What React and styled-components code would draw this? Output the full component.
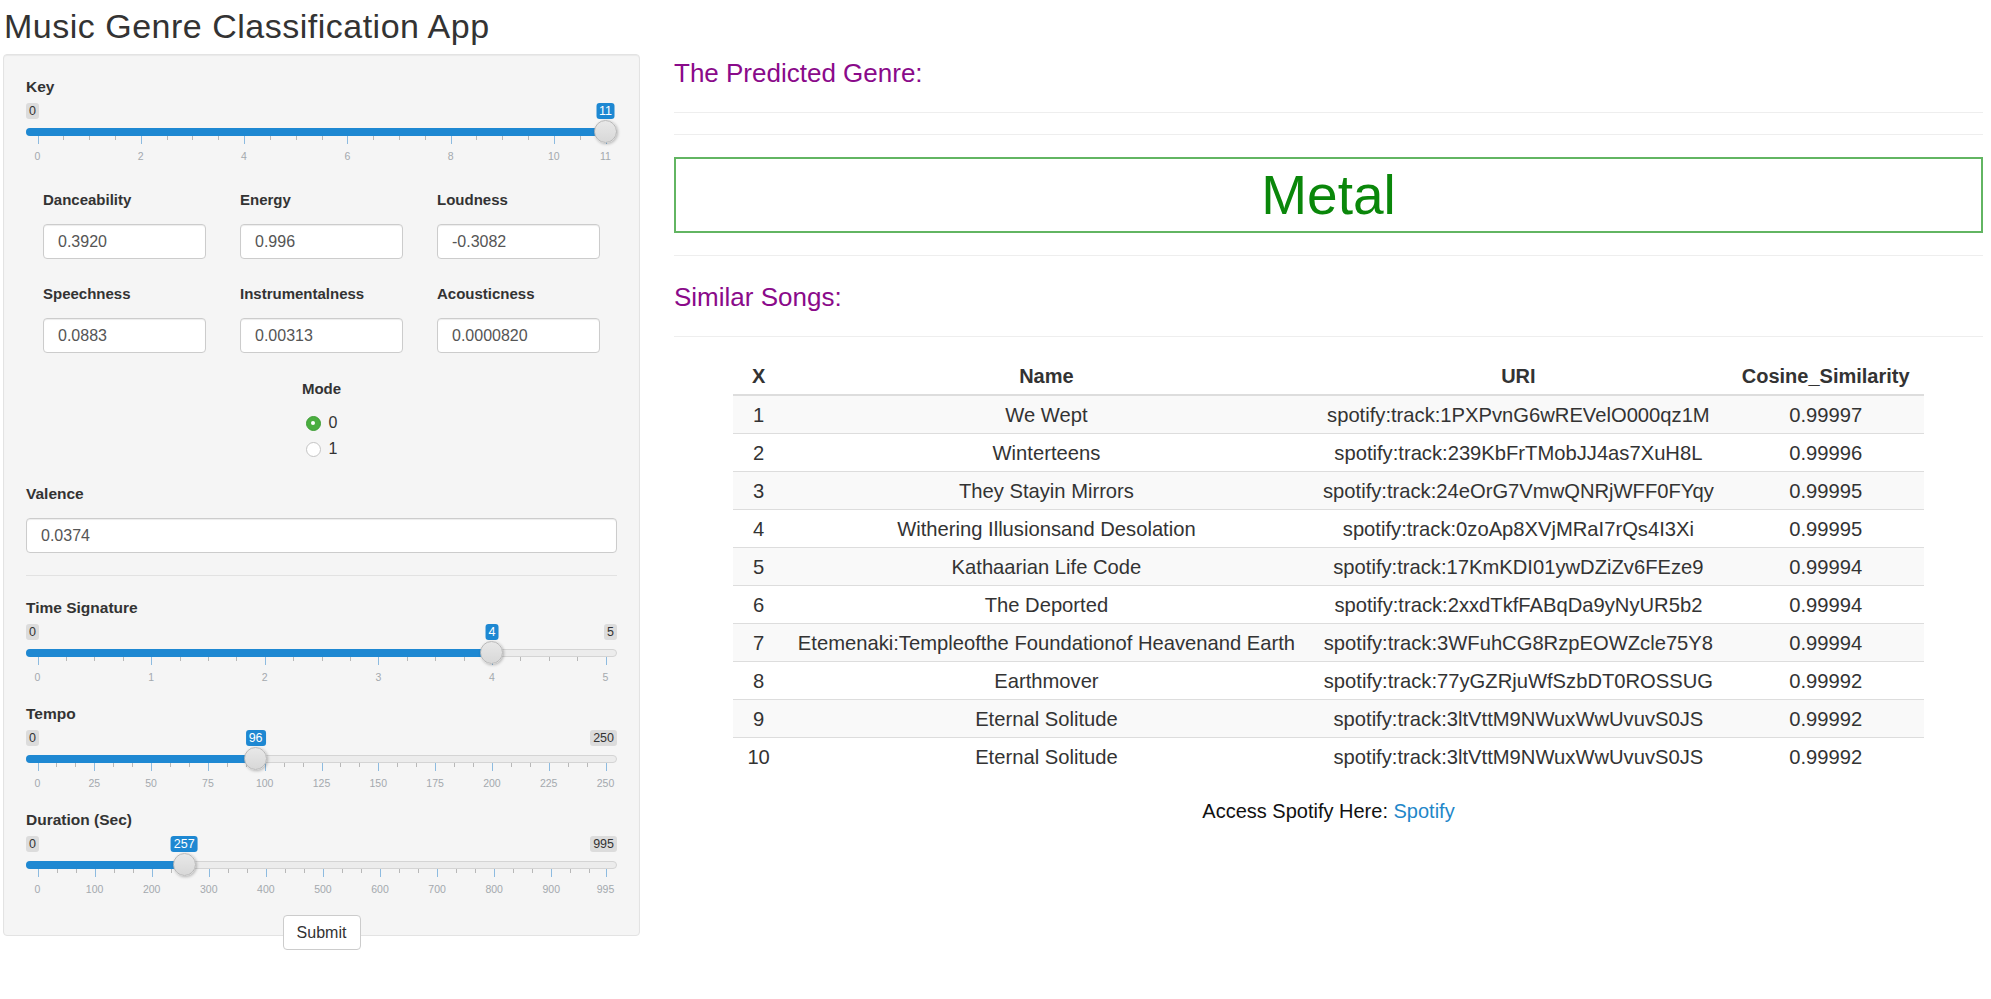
import React from 'react';
import styled, { createGlobalStyle } from 'styled-components';

const GlobalStyles = createGlobalStyle`
  body {
    margin: 0;
    padding: 0;
    background: #fff;
    color: #333;
    font-family: 'Liberation Sans', Helvetica, Arial, sans-serif;
  }
  * { box-sizing: border-box; }
`;

const BLUE = '#1e88d2';

const Page = styled.div`
  padding: 8px 8px 40px 3px;
`;

const Title = styled.h1`
  margin: 0 0 9px 1px;
  font-size: 34px;
  line-height: 37px;
  font-weight: 400;
  letter-spacing: 0.5px;
  color: #333;
`;

const Layout = styled.div`
  display: flex;
  align-items: flex-start;
  gap: 34px;
`;

const Sidebar = styled.div`
  width: 637px;
  flex: none;
  display: flex;
  flex-direction: column;
`;

const Well = styled.div`
  background: #f5f5f5;
  border: 1px solid #e3e3e3;
  border-radius: 4px;
  box-shadow: inset 0 1px 1px rgba(0, 0, 0, 0.05);
  padding: 22px 22px 19px;
`;

const Label = styled.div`
  font-size: ${p => (p.$small ? '15px' : '15.5px')};
  font-weight: 700;
  line-height: 20px;
  color: #333;
`;

const SliderBlock = styled.div`
  margin-bottom: 16px;
`;

const SliderBox = styled.div`
  position: relative;
  height: 70px;
`;

const Badge = styled.span`
  position: absolute;
  top: 6px;
  font-size: 12.5px;
  line-height: 14px;
  padding: 1px 3px;
  border-radius: 3px;
  white-space: nowrap;
  background: ${p => (p.$value ? BLUE : 'rgba(0,0,0,0.1)')};
  color: ${p => (p.$value ? '#fff' : '#333')};
`;

const Track = styled.div`
  position: absolute;
  top: 31px;
  left: 0;
  right: 0;
  height: 8px;
  border-radius: 8px;
  background: #ececec;
  border: 1px solid #d4d4d4;
`;

const Bar = styled.div`
  position: absolute;
  top: 31px;
  left: 0;
  height: 8px;
  border-radius: 8px 0 0 8px;
  background: ${BLUE};
`;

const Thumb = styled.div`
  position: absolute;
  top: 23px;
  width: 23px;
  height: 23px;
  margin-left: -11.5px;
  border-radius: 50%;
  background: linear-gradient(#e8e8e8, #d8d8d8);
  border: 1px solid #b8b8b8;
  box-shadow: 1px 1px 3px rgba(0, 0, 0, 0.25);
  z-index: 2;
`;

const Tick = styled.span`
  position: absolute;
  top: 39px;
  width: 1px;
  height: ${p => (p.$major ? '8px' : '4px')};
  background: ${p => (p.$major ? '#8dbbe0' : '#b8b8b8')};
`;

const TickLabel = styled.span`
  position: absolute;
  top: 52px;
  transform: translateX(-50%);
  font-size: 10.5px;
  line-height: 14px;
  color: #a4a9ae;
`;

const InputGrid = styled.div`
  display: grid;
  grid-template-columns: repeat(3, 1fr);
  row-gap: 25px;
  margin-top: 23px;
`;

const InputCell = styled.div`
  padding: 0 17px;
`;

const TextInput = styled.input`
  display: block;
  width: 100%;
  height: 35px;
  margin-top: 14px;
  padding: 0 14px;
  font-family: inherit;
  font-size: 16px;
  color: #555;
  background: #fff;
  border: 1px solid #ccc;
  border-radius: 4px;
  box-shadow: inset 0 1px 1px rgba(0, 0, 0, 0.075);
  outline: none;
`;

const ModeGroup = styled.div`
  margin-top: 26px;
  display: flex;
  flex-direction: column;
  align-items: center;
`;

const RadioList = styled.div`
  margin-top: 11px;
  display: flex;
  flex-direction: column;
`;

const RadioItem = styled.label`
  height: 26px;
  display: flex;
  align-items: center;
  gap: 8px;
  font-size: 16px;
  color: #333;
`;

const RadioDot = styled.span`
  width: 15px;
  height: 15px;
  border-radius: 50%;
  display: flex;
  align-items: center;
  justify-content: center;
  background: ${p => (p.$on ? '#4aae3f' : '#fff')};
  border: 1px solid ${p => (p.$on ? '#3f9e36' : '#c4c4c4')};

  &::after {
    content: '';
    width: 4px;
    height: 4px;
    border-radius: 50%;
    background: ${p => (p.$on ? '#fff' : 'transparent')};
  }
`;

const FieldBlock = styled.div`
  margin-top: 22px;
`;

const Divider = styled.hr`
  margin: 22px 0 22px;
  border: 0;
  border-top: 1px solid #e2e2e2;
`;

const SubmitRow = styled.div`
  display: flex;
  justify-content: center;
  margin-top: -21px;
  position: relative;
`;

const Button = styled.button`
  height: 35px;
  width: 78px;
  font-family: inherit;
  font-size: 16px;
  color: #333;
  background: #fff;
  border: 1px solid #ccc;
  border-radius: 4px;
`;

const Main = styled.div`
  flex: 1;
  padding-top: 5px;
  display: flex;
  flex-direction: column;
`;

const Heading = styled.h3`
  margin: ${p => p.$top || 0}px 0 0;
  font-size: 26px;
  line-height: 29px;
  font-weight: 400;
  color: #8a0a8a;
`;

const Rule = styled.hr`
  margin: ${p => p.$top}px 0 0;
  border: 0;
  border-top: 1px solid #eee;
`;

const GenreBox = styled.div`
  margin-top: 22px;
  height: 76px;
  border: 2px solid #62b562;
  display: flex;
  align-items: center;
  justify-content: center;
  font-size: 55px;
  color: #0a870a;
`;

const Table = styled.table`
  margin: 21px auto 0;
  border-collapse: collapse;
  font-size: 20.2px;
  color: #333;

  th {
    font-size: 20px;
    font-weight: 700;
    padding: 8px 14px 7px;
    line-height: 21px;
    border-bottom: 2px solid #ddd;
    text-align: center;
    white-space: nowrap;
  }

  td {
    padding: 9px 14px 8px;
    line-height: 20px;
    border-top: 1px solid #ddd;
    text-align: center;
    white-space: nowrap;
  }

  tbody tr:nth-child(odd) {
    background: #f9f9f9;
  }
`;

const LinkLine = styled.p`
  margin: 25px 0 0;
  text-align: center;
  font-size: 20px;
  line-height: 22px;
  color: #111;

  a {
    color: #1f87c9;
    text-decoration: none;
  }
`;

const pos = f => `calc(11.5px + (100% - 23px) * ${f})`;

const Slider = ({ label, min, max, value, labels, minors, hideMax }) => {
  const frac = v => (v - min) / (max - min);
  const ticks = [];
  labels.forEach((v, i) => {
    ticks.push({ v, major: true });
    const next = labels[i + 1];
    if (next === undefined) return;
    const seg = labels[1] - labels[0];
    for (let k = 1; k <= minors; k++) {
      const m = v + (seg * k) / (minors + 1);
      if (m < next) ticks.push({ v: m, major: false });
    }
  });

  return (
    <SliderBlock>
      <Label>{label}</Label>
      <SliderBox>
        <Badge style={{ left: 0 }}>{min}</Badge>
        {!hideMax && <Badge style={{ right: 0 }}>{max}</Badge>}
        <Badge $value style={{ left: pos(frac(value)), transform: 'translateX(-50%)' }}>
          {value}
        </Badge>
        <Track />
        <Bar style={{ width: pos(frac(value)) }} />
        <Thumb style={{ left: pos(frac(value)) }} />
        {ticks.map((t, i) => (
          <Tick key={i} $major={t.major} style={{ left: pos(frac(t.v)) }} />
        ))}
        {labels.map(v => (
          <TickLabel key={v} style={{ left: pos(frac(v)) }}>{v}</TickLabel>
        ))}
      </SliderBox>
    </SliderBlock>
  );
};

const inputs = [
  ['Danceability', '0.3920'],
  ['Energy', '0.996'],
  ['Loudness', '-0.3082'],
  ['Speechness', '0.0883'],
  ['Instrumentalness', '0.00313'],
  ['Acousticness', '0.0000820'],
];

const songs = [
  ['We Wept', 'spotify:track:1PXPvnG6wREVelO000qz1M', '0.99997'],
  ['Winterteens', 'spotify:track:239KbFrTMobJJ4as7XuH8L', '0.99996'],
  ['They Stayin Mirrors', 'spotify:track:24eOrG7VmwQNRjWFF0FYqy', '0.99995'],
  ['Withering Illusionsand Desolation', 'spotify:track:0zoAp8XVjMRaI7rQs4I3Xi', '0.99995'],
  ['Kathaarian Life Code', 'spotify:track:17KmKDI01ywDZiZv6FEze9', '0.99994'],
  ['The Deported', 'spotify:track:2xxdTkfFABqDa9yNyUR5b2', '0.99994'],
  ['Etemenaki:Templeofthe Foundationof Heavenand Earth', 'spotify:track:3WFuhCG8RzpEOWZcle75Y8', '0.99994'],
  ['Earthmover', 'spotify:track:77yGZRjuWfSzbDT0ROSSUG', '0.99992'],
  ['Eternal Solitude', 'spotify:track:3ltVttM9NWuxWwUvuvS0JS', '0.99992'],
  ['Eternal Solitude', 'spotify:track:3ltVttM9NWuxWwUvuvS0JS', '0.99992'],
];

const range = (a, b, s) => {
  const out = [];
  for (let v = a; v <= b; v += s) out.push(v);
  return out;
};

export default function App() {
  return (
    <Page>
      <GlobalStyles />
      <Title>Music Genre Classification App</Title>
      <Layout>
        <Sidebar>
          <Well>
            <Slider label="Key" min={0} max={11} value={11} labels={[0, 2, 4, 6, 8, 10, 11]} minors={3} hideMax />

            <InputGrid>
              {inputs.map(([name, val]) => (
                <InputCell key={name}>
                  <Label $small>{name}</Label>
                  <TextInput defaultValue={val} readOnly />
                </InputCell>
              ))}
            </InputGrid>

            <ModeGroup>
              <Label $small>Mode</Label>
              <RadioList>
                <RadioItem><RadioDot $on />0</RadioItem>
                <RadioItem><RadioDot />1</RadioItem>
              </RadioList>
            </ModeGroup>

            <FieldBlock>
              <Label>Valence</Label>
              <TextInput defaultValue="0.0374" readOnly />
            </FieldBlock>

            <Divider />

            <Slider label="Time Signature" min={0} max={5} value={4} labels={range(0, 5, 1)} minors={3} />
            <Slider label="Tempo" min={0} max={250} value={96} labels={range(0, 250, 25)} minors={2} />
            <Slider label="Duration (Sec)" min={0} max={995} value={257} labels={[...range(0, 900, 100), 995]} minors={2} />
          </Well>
          <SubmitRow>
            <Button>Submit</Button>
          </SubmitRow>
        </Sidebar>

        <Main>
          <Heading>The Predicted Genre:</Heading>
          <Rule $top={24} />
          <Rule $top={21} />
          <GenreBox>Metal</GenreBox>
          <Rule $top={22} />
          <Heading $top={27}>Similar Songs:</Heading>
          <Rule $top={24} />
          <Table>
            <thead>
              <tr>
                <th>X</th>
                <th>Name</th>
                <th>URI</th>
                <th>Cosine_Similarity</th>
              </tr>
            </thead>
            <tbody>
              {songs.map(([name, uri, sim], i) => (
                <tr key={i}>
                  <td>{i + 1}</td>
                  <td>{name}</td>
                  <td>{uri}</td>
                  <td>{sim}</td>
                </tr>
              ))}
            </tbody>
          </Table>
          <LinkLine>
            Access Spotify Here: <a href="#spotify">Spotify</a>
          </LinkLine>
        </Main>
      </Layout>
    </Page>
  );
}
